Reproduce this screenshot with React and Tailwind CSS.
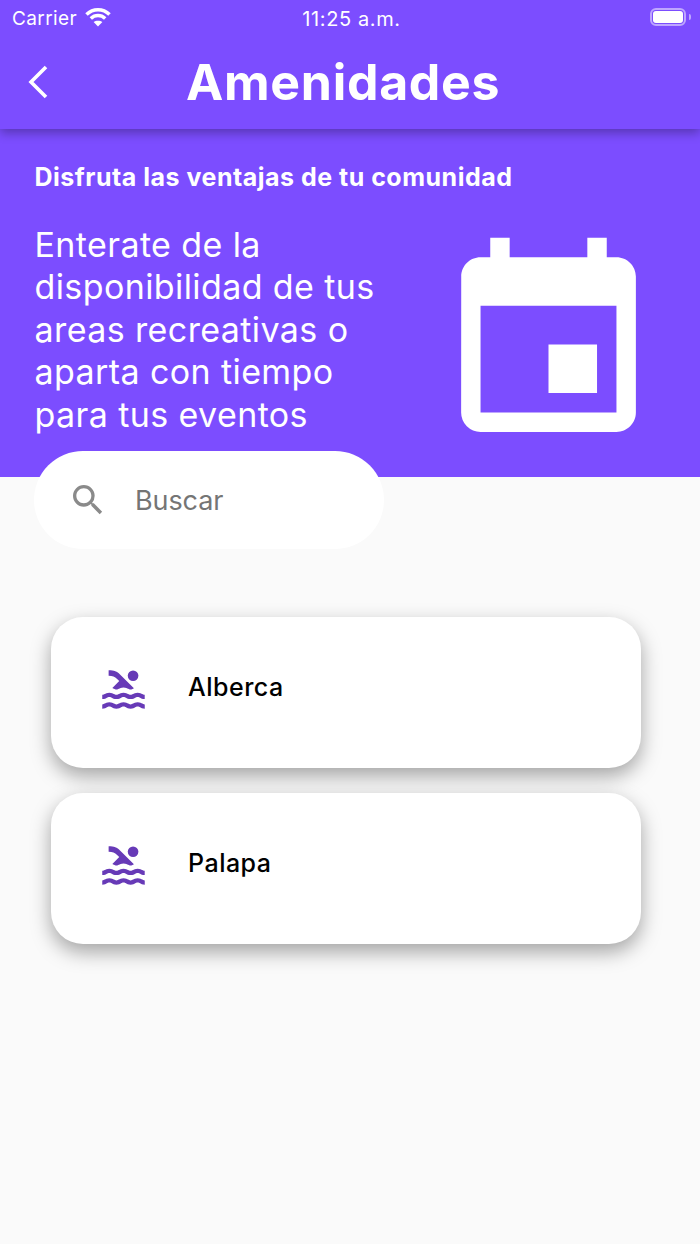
import { MdEvent, MdPool, MdSearch } from 'react-icons/md';

const amenities = ['Alberca', 'Palapa'];

function StatusBar() {
  return (
    <div className="h-[37px] grid grid-cols-3 items-center pl-3 pr-[9px] text-white text-[19px] leading-none tracking-[0.4px]">
      <div className="flex items-center gap-[8px]">
        <span>Carrier</span>
        <svg width="26" height="20" viewBox="0 0 26 20" fill="none" stroke="white" strokeWidth="3.5" className="-mt-1">
          <path d="M1.5 7.5C8 1 18 1 24.5 7.5" />
          <path d="M5.8 11.5C10 7.6 16 7.6 20.2 11.5" />
          <path d="M13 19.5 L8.6 15 C11 13.2 15 13.2 17.4 15 Z" fill="white" stroke="none" />
        </svg>
      </div>
      <div className="text-center whitespace-nowrap text-[20px] tracking-[0.6px]">11:25 a.m.</div>
      <div className="flex justify-end items-center -mt-1">
        <div className="w-[36px] h-[18px] rounded-[6px] border-2 border-white/50 p-[1px]">
          <div className="w-full h-full rounded-[3px] bg-white" />
        </div>
        <div className="w-[2px] h-[6px] ml-[3px] rounded-r-sm bg-white/50" />
      </div>
    </div>
  );
}

export default function App() {
  return (
    <div className="w-[700px] h-[1244px] overflow-hidden bg-[#fafafa] font-['Inter',sans-serif]">
      {/* App bar */}
      <header className="relative z-10 h-[129px] bg-[#7c4dff] shadow-[0_4px_10px_rgba(0,0,0,0.3)]">
        <StatusBar />
        <div className="flex items-center h-[90px] pl-[27px]">
          <svg width="22" height="34" viewBox="0 0 22 34" fill="none" stroke="white" strokeWidth="3.6">
            <path d="M19 2 L4 17 L19 32" />
          </svg>
          <h1 className="ml-[137px] text-white text-[50px] font-bold leading-none tracking-[0.7px]">Amenidades</h1>
        </div>
      </header>

      {/* Intro */}
      <section className="h-[348px] bg-[#7c4dff] pl-[34.5px] pr-[35px] text-white">
        <p className="pt-[33px] text-[25px] leading-[30px] font-bold tracking-[0.5px]">Disfruta las ventajas de tu comunidad</p>
        <div className="flex">
          <p className="w-[372px] mt-[32px] text-[34px] leading-[42.4px] tracking-[0.4px]">
            Enterate de la disponibilidad de tus areas recreativas o aparta con tiempo para tus eventos
          </p>
          <MdEvent size={233} className="ml-[25.5px] mt-[36px] shrink-0" />
        </div>
      </section>

      {/* Search */}
      <div className="relative z-10 -mt-[26px] ml-[34px] w-[350px] h-[98px] rounded-[49px] bg-white flex items-center pl-[34px]">
        <MdSearch size={40} className="text-[#8a8a8a]" />
        <span className="ml-[27px] mt-[2px] text-[27px] text-[#757575] tracking-[-0.1px]">Buscar</span>
      </div>

      {/* Amenity cards */}
      <div className="mt-[68px] ml-[51px] w-[590px] flex flex-col gap-[25px]">
        {amenities.map((name) => (
          <div key={name} className="h-[151px] rounded-[32px] bg-white shadow-[0_8px_20px_rgba(0,0,0,0.35)] flex items-start pl-[47px] pt-[47px]">
            <MdPool size={51} className="text-[#673ab7] shrink-0" />
            <span className="ml-[39px] mt-[7px] text-[25px] font-medium leading-[32px] tracking-[0.5px] text-black">{name}</span>
          </div>
        ))}
      </div>
    </div>
  );
}
